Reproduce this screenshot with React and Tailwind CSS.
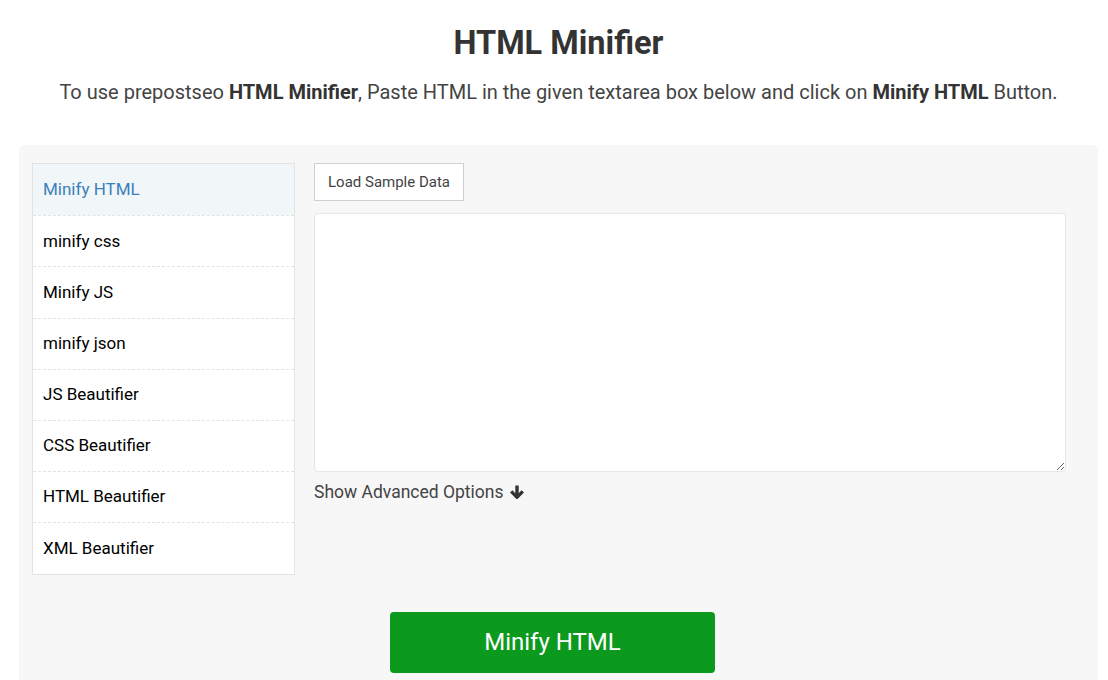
const tools = [
  'Minify HTML',
  'minify css',
  'Minify JS',
  'minify json',
  'JS Beautifier',
  'CSS Beautifier',
  'HTML Beautifier',
  'XML Beautifier',
];

function ArrowDown() {
  return (
    <svg viewBox="0 0 16 14" className="h-[14px] w-[16px]" fill="none" stroke="#333" strokeWidth="3.4">
      <path d="M8 0.5V12" />
      <path d="M2.2 6.4L8 12.2l5.8-5.8" strokeLinejoin="miter" />
    </svg>
  );
}

export default function App() {
  return (
    <div className="min-h-screen bg-white font-['Roboto',sans-serif] overflow-hidden">
      {/* Header */}
      <div className="pt-[22px] pl-[9px] text-center">
        <h1 className="text-[32.5px] leading-[42px] font-bold text-[#333]">HTML Minifier</h1>
        <p className="mt-[15px] text-[20px] leading-[26px] text-[#444]">
          To use prepostseo <strong className="text-[#333]">HTML Minifier</strong>, Paste HTML in the given textarea box below and click on{' '}
          <strong className="text-[#333]">Minify HTML</strong> Button.
        </p>
      </div>

      {/* Tool panel */}
      <div className="ml-[19px] mt-[40px] w-[1079px] rounded-[5px] bg-[#f7f7f7] pl-[13px] pt-[18px] pb-[30px]">
        <div className="flex gap-[19px]">
          {/* Sidebar */}
          <ul className="w-[263px] self-start border border-[#e3e3e3] bg-white">
            {tools.map((t, i) => (
              <li
                key={t}
                className={
                  'h-[51.2px] flex items-center pl-[10px] text-[17px] ' +
                  (i === 0
                    ? 'bg-[#f1f6f9] text-[#3b80b9]'
                    : 'text-black border-t border-dashed border-[#e3e3e3]')
                }
              >
                {t}
              </li>
            ))}
          </ul>

          {/* Editor */}
          <div className="w-[752px]">
            <button className="h-[38px] px-[13px] border border-[#cfcfcf] bg-white text-[15px] text-[#444]">
              Load Sample Data
            </button>
            <textarea className="mt-[12px] block h-[259px] w-full rounded-[4px] border border-[#e6e6e6] bg-white resize-y" />
            <div className="mt-[7px] flex items-center gap-[5px] text-[17.5px] text-[#444]">
              Show Advanced Options <ArrowDown />
            </div>
          </div>
        </div>

        <div className="mt-[37px] ml-[358px]">
          <button className="h-[61px] w-[325px] rounded-[4px] bg-[#0b991e] text-[24px] text-white">
            Minify HTML
          </button>
        </div>
      </div>
    </div>
  );
}
